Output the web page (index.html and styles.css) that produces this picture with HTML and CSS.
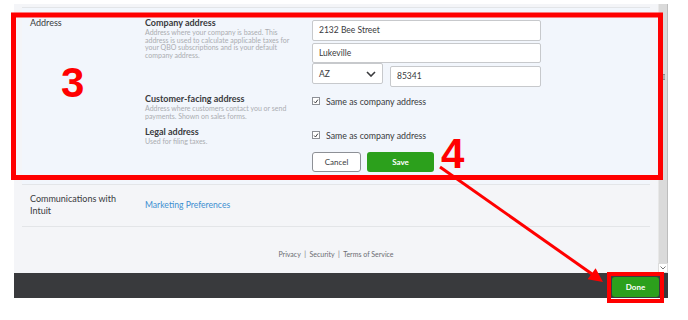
FILE: index.html
```html
<!DOCTYPE html>
<html>
<head>
  <title>Company settings</title>
  <link rel="stylesheet" href="styles.css">
</head>
<body>
<div class="app">
  <div class="main">
    <div class="page">
      <div class="row-prev"></div>

      <div class="row editing">
        <div class="row-label">Address</div>

        <div class="field-group">
          <div class="field-info">
            <div class="field-title">Company address</div>
            <div class="field-desc">Address where your company is based. This address is used to calculate applicable taxes for your QBO subscriptions and is your default company address.</div>
          </div>
          <div class="field-controls">
            <div class="input">2132 Bee Street</div>
            <div class="input input-short">Lukeville</div>
            <div class="input-line">
              <div class="select">
                <span>AZ</span>
                <svg viewBox="0 0 10 6" width="10" height="6">
                  <path d="M1 1l4 4 4-4" fill="none" stroke="#393a3d" stroke-width="1.6"/>
                </svg>
              </div>
              <div class="input input-zip">85341</div>
            </div>
          </div>
        </div>

        <div class="field-group group-customer">
          <div class="field-info">
            <div class="field-title">Customer-facing address</div>
            <div class="field-desc">Address where customers contact you or send payments. Shown on sales forms.</div>
          </div>
          <div class="field-controls check-line">
            <span class="checkbox">
              <svg viewBox="0 0 8 8" width="8" height="8">
                <path d="M1.5 4l1.8 2 3.2-4.5" fill="none" stroke="#393a3d" stroke-width="1.3"/>
              </svg>
            </span>
            Same as company address
          </div>
        </div>

        <div class="field-group group-legal">
          <div class="field-info">
            <div class="field-title">Legal address</div>
            <div class="field-desc">Used for filing taxes.</div>
          </div>
          <div class="field-controls check-line check-legal">
            <span class="checkbox">
              <svg viewBox="0 0 8 8" width="8" height="8">
                <path d="M1.5 4l1.8 2 3.2-4.5" fill="none" stroke="#393a3d" stroke-width="1.3"/>
              </svg>
            </span>
            Same as company address
          </div>
        </div>

        <div class="button-group">
          <button class="btn btn-cancel">Cancel</button>
          <button class="btn btn-save">Save</button>
        </div>
      </div>

      <div class="row comms">
        <div class="row-label">Communications with<br>Intuit</div>
        <a class="link">Marketing Preferences</a>
      </div>

      <div class="page-footer">Privacy &nbsp;|&nbsp; Security &nbsp;|&nbsp; Terms of Service</div>
    </div>

    <div class="scrollbar">
      <div class="scroll-thumb"><span class="grip"></span></div>
      <div class="scroll-arrow">
        <svg viewBox="0 0 6 4" width="6" height="4">
          <path d="M0.5 0.5l2.5 2.5 2.5-2.5" fill="none" stroke="#777" stroke-width="1"/>
        </svg>
      </div>
    </div>
  </div>

  <div class="bottom-bar">
    <button class="btn btn-done">Done</button>
  </div>
</div>

<svg class="annotations" viewBox="0 0 688 320" width="688" height="320">
  <rect x="13.5" y="15" width="647" height="162.5" fill="none" stroke="#ff0000" stroke-width="5"/>
  <rect x="609" y="274" width="53" height="27" fill="none" stroke="#ff0000" stroke-width="4"/>
  <text x="61" y="97" class="step">3</text>
  <text x="441" y="168" class="step">4</text>
  <line x1="440" y1="167" x2="592" y2="274" stroke="#ff0000" stroke-width="3"/>
  <polygon points="603,282 587.6,279.3 595.6,268.2" fill="#ff0000"/>
</svg>
</body>
</html>
```

FILE: styles.css
```css
:root {
  --text-color: #393a3d;
  --muted-color: #abadb1;
  --page-bg: #f4f5f8;
  --edit-bg: #f2f6fc;
  --border-color: #e3e5e8;
  --green: #2ca01c;
  --link-color: #3d8fd1;
}

body {
  margin: 0;
  background-color: #ffffff;
  font-family: Lato, 'Open Sans', sans-serif;
  color: var(--text-color);
}

.app {
  margin: 4px 0 0 14px;
  width: 654px;
}

.main {
  display: flex;
  height: 269px;
}

.page {
  width: 644px;
  background-color: var(--page-bg);
  overflow: hidden;
}

.row-prev {
  height: 3px;
  margin: 0 8px;
  border-bottom: 1px solid var(--border-color);
}

.row {
  margin: 0 8px;
  padding: 0 8px;
  border-bottom: 1px solid var(--border-color);
}

.row.editing {
  display: grid;
  grid-template-columns: 115px 167px 229px;
  padding-top: 9px;
  padding-bottom: 12px;
  background-color: var(--edit-bg);
}

.row-label {
  font-size: 9px;
  line-height: 12px;
}

.editing .row-label {
  grid-column: 1;
  grid-row: 1;
}

.field-group {
  grid-column: 2 / 4;
  display: grid;
  grid-template-columns: 167px 229px;
}

.group-customer {
  margin-top: 6px;
}

.group-legal {
  margin-top: 6px;
}

.field-title {
  font-size: 9px;
  font-weight: 700;
  line-height: 12px;
}

.field-desc {
  font-size: 7px;
  line-height: 7.6px;
  color: var(--muted-color);
  padding-right: 12px;
}

.field-controls {
  padding-top: 3px;
}

.input {
  height: 21px;
  box-sizing: border-box;
  border: 1px solid #c7c9cc;
  border-radius: 2px;
  background-color: #ffffff;
  padding: 0 6px;
  font-size: 8.5px;
  line-height: 19px;
}

.input-short {
  height: 20px;
  line-height: 18px;
  margin-top: 2px;
}

.input-line {
  display: flex;
  gap: 7px;
}

.select {
  width: 71px;
  height: 21px;
  box-sizing: border-box;
  border: 1px solid #c7c9cc;
  border-radius: 2px;
  background-color: #ffffff;
  padding: 0 6px;
  display: flex;
  align-items: center;
  justify-content: space-between;
  font-size: 8.5px;
}

.input-zip {
  flex: 1;
  margin-top: 3px;
}

.check-line {
  display: flex;
  align-items: center;
  gap: 6px;
  height: 12px;
  margin-top: 2px;
  padding-top: 0;
  font-size: 8.8px;
}

.check-legal {
  margin-top: 3px;
}

.checkbox {
  width: 8px;
  height: 8px;
  box-sizing: border-box;
  border: 1px solid #8d9096;
  background-color: #ffffff;
  display: flex;
  align-items: center;
  justify-content: center;
}

.checkbox svg {
  width: 7px;
  height: 7px;
}

.button-group {
  grid-column: 3;
  display: flex;
  gap: 6px;
  margin-top: 6px;
}

.btn {
  height: 20px;
  border-radius: 3px;
  font-family: Lato, 'Open Sans', sans-serif;
  font-size: 8px;
  padding: 0;
  cursor: pointer;
}

.btn-cancel {
  width: 49px;
  border: 1px solid #8d9096;
  background-color: #ffffff;
  color: var(--text-color);
}

.btn-save {
  width: 67px;
  border: none;
  background-color: var(--green);
  color: #ffffff;
  font-weight: 700;
}

.row.comms {
  display: flex;
  align-items: center;
  padding-top: 8px;
  padding-bottom: 9px;
}

.comms .row-label {
  width: 115px;
}

.link {
  font-size: 8.6px;
  color: var(--link-color);
}

.page-footer {
  margin-top: 22px;
  text-align: center;
  font-size: 7px;
  line-height: 10px;
  color: #6b6c72;
}

.scrollbar {
  width: 10px;
  display: flex;
  flex-direction: column;
  background-color: #f0f0f0;
}

.scroll-thumb {
  flex: 1;
  box-sizing: border-box;
  border-left: 1px solid #e8e8e8;
  border-right: 1px solid #bdbdbd;
  background-color: #dadada;
  padding-top: 70px;
  display: flex;
  justify-content: center;
}

.grip {
  width: 4px;
  height: 4px;
  border-top: 1px solid #8a8a8a;
  border-bottom: 1px solid #8a8a8a;
  background-color: #b0b0b0;
}

.scroll-arrow {
  height: 10px;
  background-color: #ffffff;
  border: 1px solid #dcdcdc;
  box-sizing: border-box;
  display: flex;
  align-items: center;
  justify-content: center;
}

.bottom-bar {
  height: 25px;
  background-color: #393a3d;
  display: flex;
  justify-content: flex-end;
  align-items: flex-start;
  padding: 4px 9px 0 0;
  box-sizing: border-box;
}

.btn-done {
  width: 47px;
  border: none;
  background-color: var(--green);
  color: #ffffff;
  font-weight: 700;
}

.annotations {
  position: absolute;
  top: 0;
  left: 0;
  pointer-events: none;
}

.step {
  font-family: 'Liberation Sans', Arial, sans-serif;
  font-weight: 700;
  font-size: 42px;
  fill: #ff0000;
}
```
